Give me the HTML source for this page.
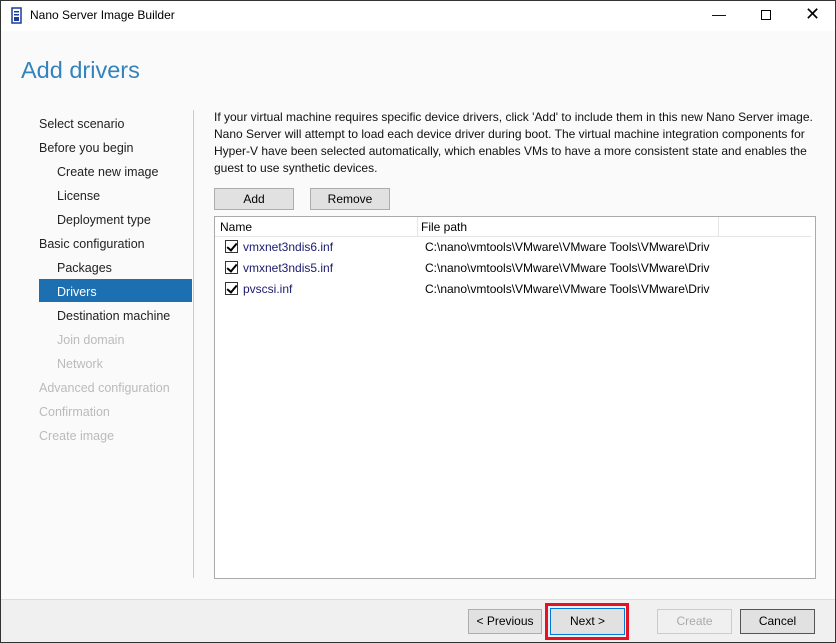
<!DOCTYPE html>
<html><head><style>
*{margin:0;padding:0;box-sizing:border-box}
body{width:836px;height:643px;overflow:hidden;font-family:"Liberation Sans",sans-serif;font-size:12px;color:#000;position:relative;background:#fafafa}
.win{position:absolute;left:0;top:0;width:836px;height:643px;border:1px solid #333}
.t{position:absolute;white-space:nowrap}
.nav{position:absolute;left:39px;font-size:12.5px;color:#222;white-space:nowrap}
.btn{position:absolute;background:#e1e1e1;border:1px solid #adadad;text-align:center;font-size:12px;line-height:20px}
.cb{position:absolute;left:225px;width:13px;height:13px;border:1px solid #333;background:#fff}
.cb::after{content:"";position:absolute;left:3px;top:0px;width:4px;height:8px;border:solid #000;border-width:0 2px 2px 0;transform:rotate(40deg)}
</style></head><body>
<div class="win"></div>
<div style="position:absolute;left:1px;top:1px;width:834px;height:30px;background:#fff"></div>
<svg style="position:absolute;left:11px;top:7px" width="11" height="17"><rect x="1" y="1" width="9" height="15" fill="none" stroke="#1a3b9c" stroke-width="1.5"/><rect x="3" y="4" width="5" height="1.5" fill="#1a3b9c"/><rect x="3" y="7" width="5" height="1.5" fill="#1a3b9c"/><rect x="3" y="10" width="5" height="4" fill="#1a3b9c"/></svg>
<div class="t" style="left:30px;top:8px;font-size:12px">Nano Server Image Builder</div>
<div class="t" style="left:712px;top:6px;font-size:14px">&#8212;</div>
<div style="position:absolute;left:761px;top:10px;width:10px;height:10px;border:1px solid #000"></div>
<div class="t" style="left:805px;top:4px;font-size:18px;font-weight:300">&#10005;</div>
<div class="t" style="left:21px;top:57px;font-size:23.5px;color:#3383bd">Add drivers</div>
<div class="nav" style="top:117px">Select scenario</div>
<div class="nav" style="top:141px">Before you begin</div>
<div class="nav" style="top:165px;left:57px">Create new image</div>
<div class="nav" style="top:189px;left:57px">License</div>
<div class="nav" style="top:213px;left:57px">Deployment type</div>
<div class="nav" style="top:237px">Basic configuration</div>
<div class="nav" style="top:261px;left:57px">Packages</div>
<div style="position:absolute;left:39px;top:279px;width:153px;height:23px;background:#1c6fb0"></div>
<div class="nav" style="top:285px;left:57px;color:#fff">Drivers</div>
<div class="nav" style="top:309px;left:57px">Destination machine</div>
<div class="nav" style="top:333px;left:57px;color:#bbb">Join domain</div>
<div class="nav" style="top:357px;left:57px;color:#bbb">Network</div>
<div class="nav" style="top:381px;color:#bbb">Advanced configuration</div>
<div class="nav" style="top:405px;color:#bbb">Confirmation</div>
<div class="nav" style="top:429px;color:#bbb">Create image</div>
<div style="position:absolute;left:193px;top:110px;width:1px;height:468px;background:#ccc"></div>
<div style="position:absolute;left:214px;top:109px;width:600px;font-size:12px;line-height:17px;color:#111">If your virtual machine requires specific device drivers, click 'Add' to include them in this new Nano Server image. Nano Server will attempt to load each device driver during boot. The virtual machine integration components for Hyper-V have been selected automatically, which enables VMs to have a more consistent state and enables the guest to use synthetic devices.</div>
<div class="btn" style="left:214px;top:188px;width:80px;height:22px">Add</div>
<div class="btn" style="left:310px;top:188px;width:80px;height:22px">Remove</div>
<div style="position:absolute;left:214px;top:216px;width:602px;height:363px;background:#fff;border:1px solid #aaa"></div>
<div style="position:absolute;left:417px;top:217px;width:1px;height:19px;background:#e5e5e5"></div>
<div style="position:absolute;left:718px;top:217px;width:1px;height:19px;background:#e5e5e5"></div>
<div style="position:absolute;left:215px;top:236px;width:596px;height:1px;background:#e5e5e5"></div>
<div class="t" style="left:220px;top:220px">Name</div>
<div class="t" style="left:421px;top:220px">File path</div>
<div class="cb" style="top:240px"></div><div class="t" style="left:243px;top:240px;color:#1a1a6e">vmxnet3ndis6.inf</div><div class="t" style="left:425px;top:240px">C:\nano\vmtools\VMware\VMware Tools\VMware\Driv</div>
<div class="cb" style="top:261px"></div><div class="t" style="left:243px;top:261px;color:#1a1a6e">vmxnet3ndis5.inf</div><div class="t" style="left:425px;top:261px">C:\nano\vmtools\VMware\VMware Tools\VMware\Driv</div>
<div class="cb" style="top:282px"></div><div class="t" style="left:243px;top:282px;color:#1a1a6e">pvscsi.inf</div><div class="t" style="left:425px;top:282px">C:\nano\vmtools\VMware\VMware Tools\VMware\Driv</div>
<div style="position:absolute;left:1px;top:599px;width:834px;height:43px;background:#f0f0f0;border-top:1px solid #ddd"></div>
<div class="btn" style="left:468px;top:609px;width:74px;height:25px;line-height:23px">&lt; Previous</div>
<div style="position:absolute;left:545px;top:603px;width:84px;height:37px;border:3px solid #e81123"></div>
<div class="btn" style="left:550px;top:608px;width:75px;height:27px;line-height:25px;border-color:#0078d7">Next &gt;</div>
<div class="btn" style="left:657px;top:609px;width:75px;height:25px;line-height:23px;color:#aaa;background:#f0f0f0;border-color:#ccc">Create</div>
<div class="btn" style="left:740px;top:609px;width:75px;height:25px;line-height:23px;border-color:#555">Cancel</div>
</body></html>
